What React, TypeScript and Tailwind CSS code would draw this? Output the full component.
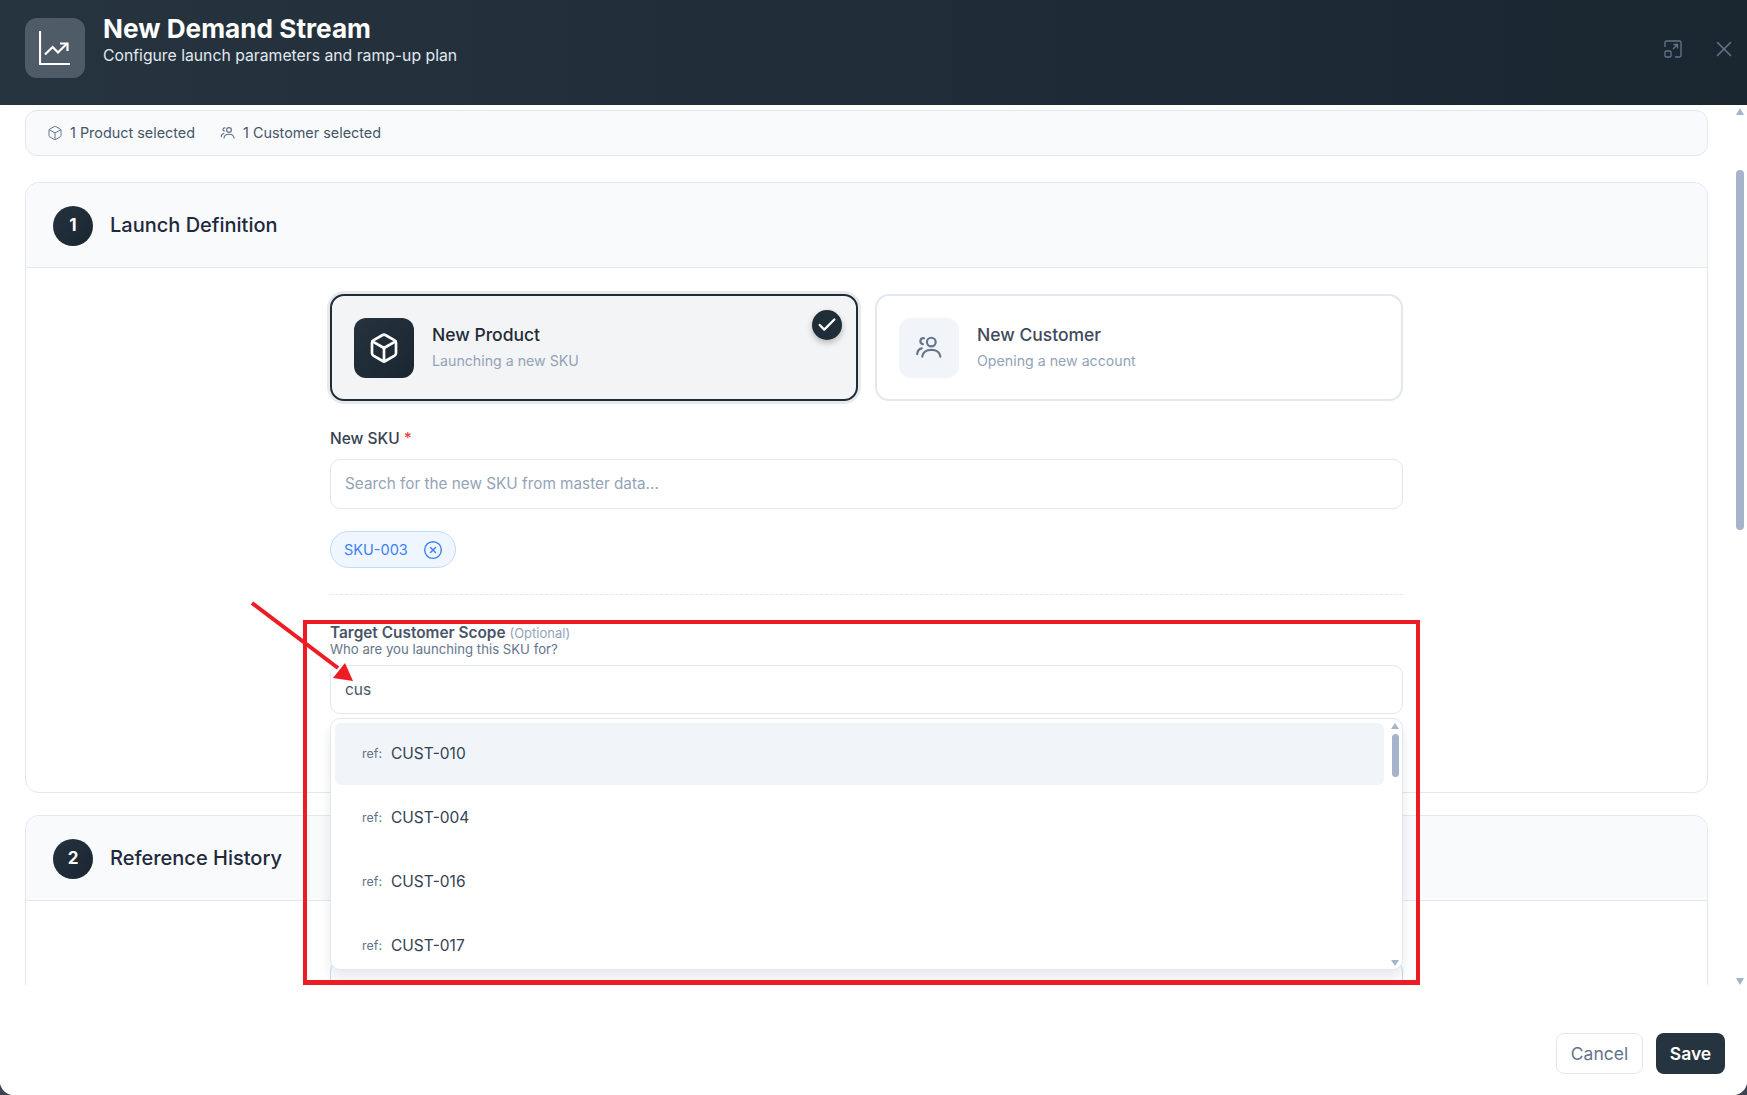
import { Box, Check, CircleX, X } from 'lucide-react';

const UsersIcon = ({ className }: { className?: string }) => (
  <svg viewBox="0 0 24 24" fill="none" stroke="currentColor" strokeWidth="1.8" strokeLinecap="round" className={className}>
    <circle cx="13.500" cy="7.500" r="3.600" />
    <path d="M6 19.500c.3-3.600 3.400-5.600 7.500-5.600s7.200 2 7.500 5.600" />
    <path d="M7.500 4.300a2.500 2.500 0 0 0-1 4.900" />
    <path d="M1.800 17.500c.2-2.700 1.700-4.300 3.800-4.800" />
  </svg>
);

const OptionText = ({ title, sub, active }: { title: string; sub: string; active?: boolean }) => (
  <div className="flex flex-col">
    <span className={`text-[17.500px] leading-[26px] font-medium ${active ? 'text-[#1f2a36]' : 'text-[#3f4b5c]'}`}>{title}</span>
    <span className="mt-[1px] text-[14.200px] leading-[24px] text-[#94a3b8]">{sub}</span>
  </div>
);

const SectionHeader = ({ n, title }: { n: number; title: string }) => (
  <div className="flex h-[85px] items-center gap-[17px] rounded-t-[14px] border-b border-[#e2e8f0] bg-[#f8fafc] pl-[27px]">
    <div className="mt-[1px] flex h-[40px] w-[40px] items-center justify-center rounded-full bg-gradient-to-br from-[#25333f] to-[#1a2530] text-[17px] font-bold text-white">
      {n}
    </div>
    <span className="mb-[1px] text-[20px] font-medium text-[#1e293b]">{title}</span>
  </div>
);

const rows = ['CUST-010', 'CUST-004', 'CUST-016', 'CUST-017'];

export default function App() {
  return (
    <div className="relative h-[1095px] w-full overflow-hidden bg-[#3b4450] font-['Inter',sans-serif]">
      <div className="flex h-full flex-col overflow-hidden rounded-b-[14px] bg-white">
        <header className="flex h-[105px] shrink-0 items-start bg-gradient-to-r from-[#26343f] to-[#1a2630] pl-[25px] pr-[10px]">
          <div className="mt-[18px] flex h-[60px] w-[60px] items-center justify-center rounded-[12px] bg-[#4f5b66]">
            <svg viewBox="0 0 32 34" fill="none" stroke="white" strokeWidth="2.200" className="h-[34px] w-[32px]">
              <path d="M1 0v33h30" />
              <path d="M6 23.500l7.600-7.500 5.400 5.500 9-9" />
              <path d="M21 12.500h7.500V20" />
            </svg>
          </div>
          <div className="ml-[18px] mt-[14px] flex flex-col">
            <h1 className="text-[26.200px] leading-[30px] font-bold text-white">New Demand Stream</h1>
            <p className="mt-[1px] text-[15.750px] leading-[22px] text-[#e2e8f0]">Configure launch parameters and ramp-up plan</p>
          </div>
          <div className="ml-auto mt-[36px] flex items-center gap-[29px] text-[#64748b]">
            <svg viewBox="0 0 18 18" fill="none" stroke="currentColor" strokeWidth="1.300" className="h-[18px] w-[18px]">
              <path d="M1 7V2.500A1.500 1.500 0 0 1 2.500 1h13A1.500 1.500 0 0 1 17 2.500v13a1.500 1.500 0 0 1-1.500 1.500H11" />
              <rect x="1" y="11" width="6" height="6" rx="1.200" />
              <path d="M9 9l4.500-4.500M9.500 4.500h4v4" />
            </svg>
            <X className="h-[26px] w-[26px]" strokeWidth={1.500} />
          </div>
        </header>

        <div className="relative flex h-[880px] shrink-0 overflow-hidden">
          <main className="flex min-w-0 flex-1 flex-col pl-[25px] pt-[5px]">
            <div className="flex h-[46px] shrink-0 items-center gap-[25px] rounded-[12px] border border-[#e2e8f0] bg-[#f8fafc] pl-[21px] text-[14.400px] text-[#475569]">
              <span className="flex items-center gap-[7px]">
                <Box className="h-[16px] w-[16px] text-[#64748b]" strokeWidth={1.500} />
                1 Product selected
              </span>
              <span className="flex items-center gap-[7px]">
                <UsersIcon className="h-[16px] w-[16px] text-[#64748b]" />
                1 Customer selected
              </span>
            </div>

            <section className="mt-[26px] h-[611px] shrink-0 rounded-[14px] border border-[#e2e8f0] bg-white">
              <SectionHeader n={1} title="Launch Definition" />
              <div className="mx-auto w-[1073px] pt-[26px]">
                <div className="flex gap-[17px]">
                  <div className="relative flex h-[107px] flex-1 items-center gap-[18px] rounded-[14px] border-2 border-[#1f2d39] bg-[#f3f4f6] pl-[22px] shadow-[0_0_0_3px_#e8e9eb]">
                    <div className="flex h-[60px] w-[60px] items-center justify-center rounded-[12px] bg-gradient-to-br from-[#25333f] to-[#1a2530]">
                      <Box className="h-[32px] w-[32px] text-white" strokeWidth={2} />
                    </div>
                    <OptionText title="New Product" sub="Launching a new SKU" active />
                    <div className="absolute right-[14px] top-[14px] flex h-[30px] w-[30px] items-center justify-center rounded-full bg-[#1f2d39] shadow-[0_3px_6px_rgba(0,0,0,0.25)]">
                      <Check className="h-[22px] w-[22px] text-white" strokeWidth={2.500} />
                    </div>
                  </div>
                  <div className="flex h-[107px] flex-1 items-center gap-[18px] rounded-[14px] border-2 border-[#e2e8f0] bg-white pl-[22px]">
                    <div className="flex h-[60px] w-[60px] items-center justify-center rounded-[12px] bg-[#f1f5f9]">
                      <UsersIcon className="h-[29px] w-[29px] text-[#64748b]" />
                    </div>
                    <OptionText title="New Customer" sub="Opening a new account" />
                  </div>
                </div>

                <label className="mt-[27px] block h-[22px] text-[15.500px] leading-[22px] font-medium text-[#374151]">
                  New SKU <span className="text-[#ef4444]">*</span>
                </label>
                <div className="mt-[9px] flex h-[50px] items-center rounded-[10px] border border-[#e2e8f0] pl-[14px] text-[15.300px] text-[#94a3b8]">
                  Search for the new SKU from master data...
                </div>
                <div className="mt-[22px] flex h-[37px] w-[126px] items-center gap-[15px] rounded-full border border-[#bfdbfe] bg-[#eff6ff] pl-[13px] text-[14.500px] whitespace-nowrap text-[#3b82f6]">
                  SKU-003
                  <CircleX className="h-[20px] w-[20px] shrink-0" strokeWidth={1.700} />
                </div>
                <div className="mt-[26px] border-t border-dashed border-[#e2e8f0]" />

                <div className="mt-[29px] text-[15.400px] leading-[18px] font-semibold text-[#475569]">
                  Target Customer Scope <span className="text-[13px] font-normal text-[#94a3b8]">(Optional)</span>
                </div>
                <div className="text-[13.200px] leading-[15px] text-[#64748b]">Who are you launching this SKU for?</div>
                <div className="relative mt-[8px] h-[49px]">
                  <div className="flex h-full items-center rounded-[10px] border border-[#e2e8f0] pl-[14px] text-[15.500px] text-[#475569]">
                    cus
                  </div>
                  <div className="absolute left-0 top-[296px] h-[40px] w-full rounded-[10px] border border-[#bfdbfe]" />
                  <div className="absolute left-0 top-[53px] flex h-[252px] w-full rounded-[10px] border border-[#e2e8f0] bg-white shadow-[0_8px_12px_rgba(100,116,139,0.15)]">
                    <div className="min-w-0 flex-1 overflow-hidden pl-[4px] pt-[4px]">
                      {rows.map((r, i) => (
                        <div
                          key={r}
                          className={`mb-[2px] flex h-[62px] shrink-0 items-center gap-[9px] rounded-[6px] pl-[27px] ${i === 0 ? 'bg-[#f1f5f9]' : ''}`}
                        >
                          <span className="text-[12.500px] text-[#64748b]">ref:</span>
                          <span className="text-[15.500px] text-[#334155]">{r}</span>
                        </div>
                      ))}
                    </div>
                    <div className="flex w-[18px] shrink-0 flex-col items-center pl-[4px] pt-[4px]">
                      <div className="h-0 w-0 border-x-[4.500px] border-b-[6px] border-x-transparent border-b-[#a5b4cb]" />
                      <div className="mt-[5px] h-[43px] w-[7px] rounded-full bg-[#a5b4cb]" />
                      <div className="mb-[3px] mt-auto h-0 w-0 border-x-[4.500px] border-t-[6px] border-x-transparent border-t-[#a5b4cb]" />
                    </div>
                  </div>
                </div>
              </div>
            </section>

            <section className="mt-[22px] h-[300px] shrink-0 rounded-[14px] border border-[#e2e8f0] bg-white">
              <SectionHeader n={2} title="Reference History" />
            </section>
          </main>

          <div className="flex w-[39px] shrink-0 flex-col items-end pr-[3px] pt-[3px]">
            <div className="h-0 w-0 border-x-[4.500px] border-b-[7px] border-x-transparent border-b-[#a5b4cb]" />
            <div className="mt-[55px] h-[360px] w-[8px] rounded-full bg-[#a5b4cb]" />
            <div className="mt-auto h-0 w-0 border-x-[4.500px] border-t-[7px] border-x-transparent border-t-[#a5b4cb]" />
          </div>
        </div>

        <footer className="flex flex-1 items-start justify-end gap-[13px] bg-white pr-[22px] pt-[48px]">
          <button className="h-[41px] w-[87px] rounded-[8px] border border-[#e2e8f0] bg-white pt-[1px] text-[17.500px] text-[#64748b]">Cancel</button>
          <button className="h-[41px] w-[69px] rounded-[8px] bg-[#26343f] pt-[1px] text-[17.500px] font-semibold text-white">Save</button>
        </footer>
      </div>

      <div className="pointer-events-none absolute left-[303px] top-[620px] h-[365px] w-[1117px] border-x-[4px] border-b-[5px] border-t-[4px] border-[#ed1c24]" />
      <svg className="pointer-events-none absolute left-[240px] top-[590px]" width="130" height="110" viewBox="0 0 130 110" fill="none">
        <path d="M12 13L98 78" stroke="#ed1c24" strokeWidth="4" />
        <path d="M105 73L93 88L113 91Z" fill="#ed1c24" />
      </svg>
    </div>
  );
}
